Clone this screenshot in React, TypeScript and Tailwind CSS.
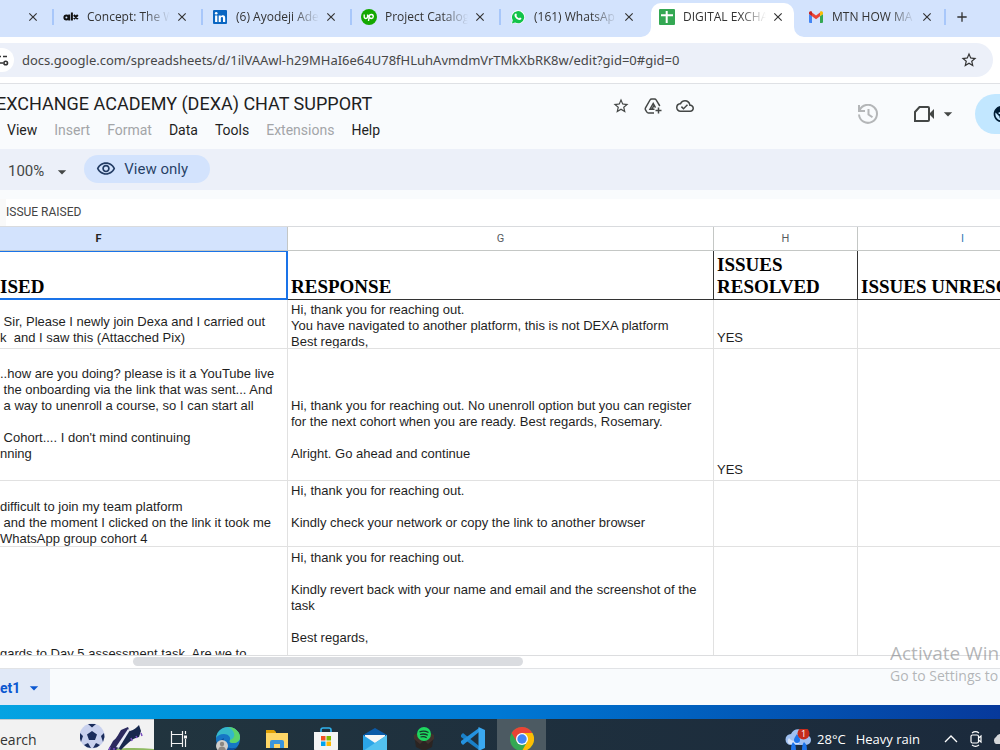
import React from 'react';
import clsx from 'clsx';
import {
  MdAdd,
  MdArrowDropDown,
  MdClose,
  MdOutlineCloudDone,
  MdOutlineVisibility,
  MdPublic,
  MdStarBorder,
} from 'react-icons/md';

/* ---------- Favicons ---------- */

function AlxIcon() {
  return (
    <svg viewBox="0 0 16 16" className="h-4 w-4 shrink-0" fill="none" stroke="#111" strokeWidth="2">
      <circle cx="3.4" cy="8.6" r="2" />
      <path d="M6.2 5.4v6.2M8.9 3.6v8M10.8 6l4 4M14.8 6l-4 4" />
    </svg>
  );
}

function LinkedInIcon() {
  return (
    <svg viewBox="0 0 16 16" className="h-4 w-4 shrink-0">
      <rect x="1" y="1" width="14" height="14" rx="1" fill="#0a66c2" />
      <circle cx="4.2" cy="4.3" r="1.3" fill="#fff" />
      <path d="M3.1 6.5h2.2V13H3.1zM6.7 6.5h2.1v.9c.4-.7 1.2-1.1 2.1-1.1 1.8 0 2.3 1.2 2.3 2.9V13H11V9.6c0-.9-.2-1.5-1-1.5s-1.2.6-1.2 1.5V13H6.7z" fill="#fff" />
    </svg>
  );
}

function UpworkIcon() {
  return (
    <svg viewBox="0 0 16 16" className="h-4 w-4 shrink-0">
      <circle cx="8" cy="8" r="8" fill="#14a800" />
      <path
        d="M3.2 5.6v2.200a1.700 1.700 0 0 0 3.400 0V5.600c.5 1.600 1.500 3.700 3.700 3.900a2 2 0 1 0-2-2.300L7.500 12"
        fill="none"
        stroke="#fff"
        strokeWidth="1.4"
      />
    </svg>
  );
}

function WhatsAppIcon() {
  return (
    <svg viewBox="0 0 16 16" className="h-4 w-4 shrink-0">
      <path d="M1.2 15l1-3.600A6.800 6.800 0 1 1 4.800 14z" fill="#fff" />
      <path d="M1.9 14.400l.9-3.200a6.100 6.100 0 1 1 2.300 2.300z" fill="#12c34a" />
      <path
        d="M5.8 4.400c.3 0 .5 0 .6.400l.5 1.200c.1.300-.5.800-.5 1 .5 1 1.400 1.700 2.500 2.200.3 0 .7-.9 1-.8l1.300.6c.3.200.2.900-.1 1.300-.9 1.100-2.500.7-3.800-.1-1.500-.9-3-2.600-2.800-4.200.1-.8.6-1.500 1.300-1.600z"
        fill="#fff"
      />
    </svg>
  );
}

function SheetsIcon() {
  return (
    <svg viewBox="0 0 16 16" className="h-4 w-4 shrink-0">
      <rect width="16" height="16" rx="1" fill="#34a853" />
      <path d="M2 5.2h12v2H8.700V14h-2V7.200H2zM6.700 2h2v4h-2z" fill="#fff" />
    </svg>
  );
}

function GmailIcon() {
  return (
    <svg viewBox="0 0 16 16" className="h-4 w-4 shrink-0">
      <path d="M1 5l3 2.200V14H2a1 1 0 0 1-1-1z" fill="#4285f4" />
      <path d="M15 5l-3 2.200V14h2a1 1 0 0 0 1-1z" fill="#34a853" />
      <path d="M4 3.400l4 3 4-3v3.800l-4 3-4-3z" fill="#ea4335" />
      <path d="M1 5V4c0-1.600 1.700-2.200 3-1.200v4.400z" fill="#c5221f" />
      <path d="M15 5V4c0-1.600-1.700-2.200-3-1.200v4.400z" fill="#fbbc04" />
    </svg>
  );
}

/* ---------- Browser chrome ---------- */

interface BrowserTab {
  title: string;
  icon: React.ReactNode;
  active?: boolean;
  separator?: boolean;
}

const browserTabs: BrowserTab[] = [
  { title: 'Concept: The W', icon: <AlxIcon />, separator: true },
  { title: '(6) Ayodeji Ade', icon: <LinkedInIcon />, separator: true },
  { title: 'Project Catalog', icon: <UpworkIcon />, separator: true },
  { title: '(161) WhatsAp', icon: <WhatsAppIcon />, separator: true },
  { title: 'DIGITAL EXCHA', icon: <SheetsIcon />, active: true },
  { title: 'MTN HOW MA', icon: <GmailIcon /> },
];

function CloseButton({ label }: { label: string }) {
  return (
    <button aria-label={`Close ${label}`} className="flex h-4 w-4 shrink-0 items-center justify-center text-[#333]">
      <MdClose className="h-3.5 w-3.5" />
    </button>
  );
}

function TabFoot({ side }: { side: 'left' | 'right' }) {
  return (
    <svg
      viewBox="0 0 10 10"
      className={clsx('absolute bottom-0 h-2.5 w-2.5', side === 'left' ? '-left-2.5' : '-right-2.5')}
      fill="#fff"
    >
      <path d={side === 'left' ? 'M10 0v10H0A10 10 0 0 0 10 0z' : 'M0 0v10h10A10 10 0 0 1 0 0z'} />
    </svg>
  );
}

function TabStrip() {
  return (
    <div className="flex h-[37px] shrink-0 items-end overflow-hidden bg-[#d3e3fd]">
      <div className="flex h-[34px] w-[52px] shrink-0 items-center justify-end pr-[11px] pb-1.5">
        <CloseButton label="tab" />
      </div>
      {browserTabs.map((tab) => (
        <div key={tab.title} className="flex h-[34px] w-[149px] shrink-0">
          <span className={clsx('mt-1.5 mr-px h-4 w-0.5 shrink-0', tab.separator && 'bg-[#a8c7fa]')} />
          <div
            className={clsx(
              'relative flex h-full w-[143px] items-center gap-1 px-2 pb-1.5',
              tab.active && 'rounded-t-[10px] bg-white'
            )}
          >
            {tab.active && <TabFoot side="left" />}
            {tab.icon}
            <a
              href="#"
              className="min-w-0 flex-1 overflow-hidden pl-1 font-['Open_Sans',sans-serif] text-[12px] whitespace-nowrap text-[#333] [mask-image:linear-gradient(to_right,black_70%,transparent)]"
            >
              {tab.title}
            </a>
            <CloseButton label={tab.title} />
            {tab.active && <TabFoot side="right" />}
          </div>
        </div>
      ))}
      <div className="flex h-[34px] items-center gap-2 pb-1.5">
        <span className="-ml-0.5 h-4 w-0.5 bg-[#a8c7fa]" />
        <button aria-label="New tab" className="text-[#333]">
          <MdAdd className="h-4 w-4" />
        </button>
      </div>
    </div>
  );
}

function AddressBar() {
  return (
    <div className="flex h-[47px] shrink-0 items-center border-b border-[#dfe1e5] bg-white pr-[7px]">
      <div className="flex h-[34px] w-full items-center overflow-hidden rounded-r-full bg-[#ecf0f9]">
        <button aria-label="Site information" className="flex h-6 w-3.5 shrink-0 items-center rounded-r-full bg-white text-[#333]">
          <svg viewBox="0 0 10 12" className="h-3 w-2.5" fill="none" stroke="currentColor" strokeWidth="1.6">
            <path d="M0 2.500h1M3 2.500h4M0 9h3" />
            <circle cx="5.7" cy="9" r="1.8" />
          </svg>
        </button>
        <input
          aria-label="Address"
          readOnly
          defaultValue="docs.google.com/spreadsheets/d/1ilVAAwl-h29MHaI6e64U78fHLuhAvmdmVrTMkXbRK8w/edit?gid=0#gid=0"
          className="min-w-0 flex-1 bg-transparent px-2 pt-px font-['Noto_Sans',sans-serif] text-[13px] text-[#474747] outline-none"
        />
        <button aria-label="Bookmark this tab" className="mr-[15px] text-[#333]">
          <MdStarBorder className="h-[18px] w-[18px]" />
        </button>
      </div>
    </div>
  );
}

/* ---------- Document header ---------- */

const menus = [
  { label: 'View' },
  { label: 'Insert', disabled: true },
  { label: 'Format', disabled: true },
  { label: 'Data' },
  { label: 'Tools' },
  { label: 'Extensions', disabled: true },
  { label: 'Help' },
];

function DriveShortcutIcon() {
  return (
    <svg viewBox="0 0 18 18" className="h-[18px] w-[18px]" fill="none" stroke="currentColor" strokeWidth="1.5">
      <path d="M10 16H4.500a2 2 0 0 1-1.700-1L1.500 12.800a2 2 0 0 1 0-2L6 3a2 2 0 0 1 1.700-1h2.800a2 2 0 0 1 1.700 1l3.600 6" />
      <path d="M10.500 12.200H6L9.200 6.500l2.300 4.200M8 12l2-3.500" />
      <path d="M14.500 10.500v6M11.500 13.500h6" />
    </svg>
  );
}

function DocumentHeader() {
  return (
    <header className="flex h-[65px] shrink-0 overflow-hidden bg-[#f9fbfd]">
      <div className="pt-2">
        <h1 className="-ml-1 font-['Roboto',sans-serif] text-[18px] leading-6 whitespace-nowrap text-[#1f1f1f]">
          EXCHANGE ACADEMY (DEXA) CHAT SUPPORT
        </h1>
        <nav className="flex gap-[17px] pt-1 pl-[7px] font-['Roboto',sans-serif] text-[14px] leading-5">
          {menus.map((menu) => (
            <button key={menu.label} disabled={menu.disabled} className="text-[#1f1f1f] disabled:text-[#a3a5a8]">
              {menu.label}
            </button>
          ))}
        </nav>
      </div>
      <div className="ml-auto flex">
        <div className="mt-3 flex h-5 items-center gap-3.5 text-[#444746]">
          <button aria-label="Star"><MdStarBorder className="h-[18px] w-[18px]" /></button>
          <button aria-label="Add shortcut to Drive"><DriveShortcutIcon /></button>
          <button aria-label="Saved to Drive"><MdOutlineCloudDone className="h-[18px] w-[18px]" /></button>
        </div>
        <div className="mt-2.5 ml-[164px] flex h-10 items-center">
          <button aria-label="Version history" className="text-[#b4b6b8]">
            <svg viewBox="0 0 20 20" className="h-5 w-5" fill="none" stroke="currentColor" strokeWidth="2">
              <path d="M1 1v6h6M1.600 6.500A9 9 0 1 1 1 10.500M10.500 5v5.500l4 2.800" />
            </svg>
          </button>
          <button aria-label="Join a call" className="ml-9 flex items-center text-[#444746]">
            <svg viewBox="0 0 20 16" className="h-4 w-5" fill="none" stroke="currentColor" strokeWidth="2">
              <path d="M1 15V6l4.500-5H14a1 1 0 0 1 1 1v12a1 1 0 0 1-1 1z" />
              <path d="M15.500 7.500L20 3v10l-4.500-4.500z" fill="currentColor" stroke="none" />
            </svg>
            <MdArrowDropDown className="ml-1 h-5 w-5" />
          </button>
          <button aria-label="Share" className="ml-[17px] h-10 w-[25px] overflow-hidden rounded-l-full bg-[#c2e7ff] pl-[17px] text-[#001d35]">
            <MdPublic className="h-5 w-5" />
          </button>
        </div>
      </div>
    </header>
  );
}

function Toolbar() {
  return (
    <div className="mb-[9px] flex h-[41px] shrink-0 items-center bg-[#ecf0f9] font-['Roboto',sans-serif] text-[#444746]">
      <button aria-label="Zoom" className="flex items-center pt-1 pl-2 text-[15px]">
        100%
        <MdArrowDropDown className="ml-2 h-5 w-5" />
      </button>
      <button className="mb-0.5 ml-3 flex h-7 items-center gap-2 rounded-full bg-[#d3e3fd] pr-[22px] pl-3 text-[15px] text-[#041e49]/85">
        <MdOutlineVisibility className="h-5 w-5" />
        <span className="pt-px">View only</span>
      </button>
    </div>
  );
}

function FormulaBar() {
  return (
    <div className="flex h-7 shrink-0 items-center border-b border-[#d9dbde] bg-white">
      <span className="h-full w-1.5 shrink-0 bg-[#f9f9f9]" />
      <input
        aria-label="Formula"
        readOnly
        defaultValue="ISSUE RAISED"
        className="min-w-0 flex-1 pb-0.5 font-['Roboto',sans-serif] text-[12px] text-[#444] outline-none"
      />
    </div>
  );
}

/* ---------- Sheet ---------- */

interface SheetRow {
  box: string;
  top?: boolean[];
  cells: string[][];
}

const rows: SheetRow[] = [
  {
    box: 'h-12',
    top: [false, true],
    cells: [
      [' Sir, Please I newly join Dexa and I carried out', 'k  and I saw this (Attacched Pix)'],
      [
        'Hi, thank you for reaching out.',
        'You have navigated to another platform, this is not DEXA platform',
        'Best regards,',
      ],
      ['YES'],
      [],
    ],
  },
  {
    box: 'h-[131px]',
    cells: [
      [
        '..how are you doing? please is it a YouTube live',
        ' the onboarding via the link that was sent... And',
        ' a way to unenroll a course, so I can start all',
        '',
        ' Cohort.... I don\'t mind continuing',
        'nning',
        '',
      ],
      [
        'Hi, thank you for reaching out. No unenroll option but you can register',
        'for the next cohort when you are ready. Best regards, Rosemary.',
        '',
        'Alright. Go ahead and continue',
        '',
      ],
      ['YES'],
      [],
    ],
  },
  {
    box: 'h-[65px]',
    top: [true, true],
    cells: [
      [
        '',
        'difficult to join my team platform',
        ' and the moment I clicked on the link it took me',
        'WhatsApp group cohort 4',
      ],
      ['Hi, thank you for reaching out.', '', 'Kindly check your network or copy the link to another browser'],
      [],
      [],
    ],
  },
  {
    box: 'h-[140px] pt-[3px]',
    top: [true, true],
    cells: [
      ['', '', '', '', '', '', 'gards to Day 5 assessment task. Are we to'],
      [
        'Hi, thank you for reaching out.',
        '',
        'Kindly revert back with your name and email and the screenshot of the',
        'task',
        '',
        'Best regards,',
      ],
      [],
      [],
    ],
  },
];

const headings = [['ISED'], ['RESPONSE'], ['ISSUES', 'RESOLVED'], ['ISSUES UNRESOLVED']];

function Lines({ lines }: { lines: string[] }) {
  return (
    <>
      {lines.map((line, i) => (
        <div key={i}>{line || '\u00a0'}</div>
      ))}
    </>
  );
}

function Sheet() {
  return (
    <main className="min-h-0 flex-1 overflow-hidden border-b border-[#dcdddf] bg-white">
      <table className="w-full min-w-[1067px] table-fixed border-separate border-spacing-0">
        <colgroup>
          <col className="w-[288px]" />
          <col className="w-[426px]" />
          <col className="w-[144px]" />
          <col />
        </colgroup>
        <thead>
          <tr className="font-['Roboto',sans-serif] text-[11px] leading-[23px] text-[#575b5f]">
            <th className="border-r border-b border-[#c4c7c5] bg-[#d3e3fd] p-0 pr-[90px] font-bold text-[#222]">F</th>
            <th className="border-r border-b border-[#c4c7c5] p-0 font-normal">G</th>
            <th className="border-r border-b border-[#c4c7c5] p-0 font-normal">H</th>
            <th className="border-b border-[#c4c7c5] p-0 font-normal text-[#2f78b5]">I</th>
          </tr>
        </thead>
        <tbody>
          <tr className="font-['Liberation_Serif',serif] text-[19px] leading-[22px] font-bold text-black">
            {headings.map((lines, i) => (
              <td key={i} className={clsx('relative border-b border-[#333] p-0', i > 0 && 'border-r')}>
                <div
                  className={clsx(
                    'flex h-12 flex-col justify-end overflow-hidden pb-px whitespace-pre',
                    i > 0 && 'pl-[3px]'
                  )}
                >
                  <Lines lines={lines} />
                </div>
                {i === 0 && (
                  <span className="absolute inset-x-0 top-0 -bottom-px border-t border-r-2 border-b-2 border-[#1a73e8]" />
                )}
              </td>
            ))}
          </tr>
          {rows.map((row, r) => (
            <tr key={r} className="font-['Liberation_Sans',sans-serif] text-[13px] leading-4 text-[#1f1f1f]">
              {row.cells.map((lines, c) => (
                <td key={c} className="border-r border-b border-[#e1e1e1] p-0">
                  <div
                    className={clsx(
                      'flex flex-col overflow-hidden py-0.5 whitespace-pre',
                      row.box,
                      !row.top?.[c] && 'justify-end',
                      c > 0 && 'pl-[3px]'
                    )}
                  >
                    <Lines lines={lines} />
                  </div>
                </td>
              ))}
            </tr>
          ))}
        </tbody>
      </table>
    </main>
  );
}

function SheetFooter() {
  return (
    <footer className="shrink-0">
      <div className="h-[13px] border-b border-[#e1e3e6] bg-white pt-px">
        <div className="ml-[133px] h-[9px] w-[39%] rounded-full bg-[#dadce0]" />
      </div>
      <div className="flex h-9 bg-[#f9fbfd]">
        <button className="flex w-[50px] items-center bg-[#e1e9f7] pt-0.5 font-['Roboto',sans-serif] text-[14px] font-bold text-[#0b57d0]">
          et1
          <MdArrowDropDown className="ml-1 h-5 w-5" />
        </button>
      </div>
    </footer>
  );
}

/* ---------- Taskbar ---------- */

const taskIcons = [
  {
    name: 'Task View',
    art: (
      <g fill="none" stroke="#f3f3f3" strokeWidth="1.2">
        <path d="M4.500 4v3.500h11V4M4.500 20v-3.500h11V20M4.500 7.500v9M15.500 7.500v9M18.500 4v3M18.500 12v8" />
        <path d="M17 8.500h3v3h-3z" fill="#f3f3f3" stroke="none" />
      </g>
    ),
  },
  {
    name: 'Edge',
    art: (
      <>
        <circle cx="12" cy="12" r="12" fill="#1676c5" />
        <path d="M0 11C1 4 6 0 12 0c7 0 12 5 12 10 0 4-3 6-7 6-3 0-4-1-3-3 1-3-2-6-6-6-4 0-7 2-8 4z" fill="#35b8c9" />
        <path d="M12 0c7 0 12 5 12 10 0 4-3 6-7 6-3 0-4-1-3-3 7-2 5-10-2-13z" fill="#5bd36b" />
        <path d="M8 11c-2 6 3 11 10 10 2 0 4-1 5-3-4 8-17 7-19-1 0-3 1-5 4-6z" fill="#0d4f9c" />
        <circle cx="6" cy="19" r="6" fill="#d0cecb" />
        <circle cx="6" cy="17" r="2.2" fill="#8b8783" />
        <path d="M2 24c0-6 8-6 8 0z" fill="#8b8783" />
      </>
    ),
  },
  {
    name: 'File Explorer',
    art: (
      <>
        <path d="M1 3h8l2 2v4H1z" fill="#e0a106" />
        <path d="M1 6h22v15H1z" fill="#ffd767" />
        <path d="M5 21v-6a2 2 0 0 1 2-2h10a2 2 0 0 1 2 2v6h-4v-4H9v4z" fill="#3a96dd" />
      </>
    ),
  },
  {
    name: 'Microsoft Store',
    art: (
      <>
        <path d="M7 6V3a2 2 0 0 1 2-2h6a2 2 0 0 1 2 2v3" fill="none" stroke="#2fb2ee" strokeWidth="1.6" />
        <path d="M0 5h24v17a2 2 0 0 1-2 2H2a2 2 0 0 1-2-2z" fill="#f4f4f4" />
        <path d="M7 9h4.500v4.500H7z" fill="#f25022" />
        <path d="M12.500 9H17v4.500h-4.500z" fill="#7fba00" />
        <path d="M7 14.500h4.500V19H7z" fill="#00a4ef" />
        <path d="M12.500 14.500H17V19h-4.500z" fill="#ffb900" />
      </>
    ),
  },
  {
    name: 'Mail',
    art: (
      <>
        <path d="M0 8l12-7 12 7v4H0z" fill="#0a5aa8" />
        <path d="M2 8h20v9H2z" fill="#f6f6f6" />
        <path d="M0 8l12 8 12-8v16H0z" fill="#2ba5e8" />
        <path d="M0 24L24 8v16z" fill="#53c2f0" />
      </>
    ),
  },
  {
    name: 'Spotify',
    art: (
      <>
        <path d="M2 8l10 4 10-4-2 12-8 4-8-4z" fill="#2b2422" />
        <path d="M2 8l5-3 5 8-4 4-6-5zM22 8l-5-3-5 8 4 4 6-5z" fill="#40322d" />
        <circle cx="12" cy="7" r="7" fill="#1ed760" />
        <path d="M7.500 4.800c3-1 6.500-.7 9 .7M8 7.500c2.600-.8 5.500-.5 7.800.8M8.500 10c2-.6 4.500-.4 6.200.7" fill="none" stroke="#17352a" strokeWidth="1.3" />
      </>
    ),
  },
  {
    name: 'Visual Studio Code',
    art: (
      <>
        <path d="M0 8l2-2 16 13v4L0 10z" fill="#1a80c8" />
        <path d="M0 16l2 2L18 5V1L0 14z" fill="#2492df" />
        <path d="M17.500 0L24 3v18l-6.500 3z" fill="#3aa8f0" />
      </>
    ),
  },
  {
    name: 'Chrome',
    active: true,
    art: (
      <>
        <circle cx="12" cy="12" r="12" fill="#34a853" />
        <path d="M12 12L1.600 6A12 12 0 0 1 22.400 6z" fill="#ea4335" />
        <path d="M12 6h10.400A12 12 0 0 1 12 24l5-9z" fill="#fbbc04" />
        <path d="M1.600 6L7 15l5-9z" fill="#ea4335" />
        <circle cx="12" cy="12" r="6" fill="#fff" />
        <circle cx="12" cy="12" r="4.7" fill="#4285f4" />
      </>
    ),
  },
];

function SearchArt() {
  return (
    <svg viewBox="0 0 74 30" className="h-[30px] w-[74px]">
      <path d="M18 30c12-5 34-6 56-4v4z" fill="#8fba62" />
      <circle cx="12" cy="13" r="12.500" fill="#c9d1ee" />
      <path d="M12 8l5 3.600-2 5.400H9l-2-5.400zM8 1h8l-4 3.500zM0 10l3 3-2 6-1.500-5zM24 10l-3 3 2 6 1.500-5zM4 22l4-2 3 5-4-.8zM20 22l-4-2-3 5 4-.8z" fill="#1b2d5c" />
      <path d="M28 27l5-9c4-3 6-8 8-11l7-3 2 5c-3 8-8 13-14 18z" fill="#2c2a5e" />
      <path d="M38 25l8-15 4-2c4-1 7-4 9-6l2 6-2 6c-7 1-13 8-18 13z" fill="#17284d" />
      <path d="M36 24L48 6l2 1-11 18z" fill="#e8eaf6" />
      <path d="M30 24l-1 4M34 25v3M51 15l1 3M56 13l1 2M61 10l1 3" stroke="#7a4fc0" strokeWidth="1.5" />
    </svg>
  );
}

function Taskbar() {
  return (
    <div className="flex h-[31px] shrink-0 overflow-hidden bg-linear-to-r from-[#22363f] to-[#1b2a3c] font-['Open_Sans',sans-serif]">
      <button className="flex w-[154px] shrink-0 border-t border-[#c8cccf] bg-[#f2f2f2] text-left">
        <span className="pt-2.5 text-[14px] leading-5 text-[#333]">earch</span>
        <span className="ml-auto pt-[3px]">
          <SearchArt />
        </span>
      </button>
      {taskIcons.map((item) => (
        <button
          key={item.name}
          aria-label={item.name}
          className={clsx('flex w-[49px] shrink-0 justify-center pt-2', item.active && 'bg-[#4c5a62]')}
        >
          <svg viewBox="0 0 24 24" className="h-6 w-6 shrink-0">
            {item.art}
          </svg>
        </button>
      ))}
      <div className="ml-auto flex shrink-0 text-[13px] leading-5 text-white">
        <button className="flex pt-2.5" aria-label="Weather">
          <svg viewBox="0 0 26 24" className="h-6 w-[26px]">
            <path d="M6 16a5.500 5.500 0 0 1 0-11 8 8 0 0 1 15 1 5 5 0 0 1 0 10z" fill="#9fc0f2" />
            <path d="M4 15a4.500 4.500 0 0 1 0-6c2 3 6 4 10 2v4z" fill="#d5e3fa" />
            <path d="M12 5c2 3 3 4 3 6a3 3 0 0 1-6 0c0-2 1-3 3-6zM8 13c3 3 3 4 3 11H6c0-6 0-8 2-11zM19 13c3 3 3 4 3 11h-5c0-6 0-8 2-11z" fill="#1d74ea" />
            <circle cx="18.500" cy="4.500" r="6" fill="#c42b1c" />
            <text x="18.500" y="8" textAnchor="middle" fontSize="9" fill="#fff">1</text>
          </svg>
          <span className="ml-1.5">28°C</span>
          <span className="ml-2.5">Heavy rain</span>
        </button>
        <button aria-label="Show hidden icons" className="ml-6 flex pt-3.5">
          <svg viewBox="0 0 14 12" className="h-3 w-3.5" fill="none" stroke="#fff" strokeWidth="1.3">
            <path d="M1 9l6-6 6 6" />
          </svg>
        </button>
        <button aria-label="Meet Now" className="ml-3 flex pt-3">
          <svg viewBox="0 0 12 16" className="h-4 w-3" fill="none" stroke="#fff" strokeWidth="1.2">
            <rect x="1" y="4" width="7.500" height="8" rx="1.500" />
            <path d="M8.500 7l2.500-2v6L8.500 9M2 2c2-1.500 5-1.500 7 0M2 14c2 1.500 5 1.500 7 0" />
          </svg>
        </button>
        <button aria-label="OneDrive" className="ml-2.5 flex w-2 overflow-hidden pt-[15px]">
          <svg viewBox="0 0 20 12" className="h-3 w-5 shrink-0">
            <path d="M4 10a4 4 0 0 1 0-7 6 6 0 0 1 11 1 3 3 0 0 1 0 6z" fill="#d5d7da" />
          </svg>
        </button>
      </div>
    </div>
  );
}

function ActivationNotice() {
  return (
    <div className="pointer-events-none absolute right-0 bottom-16 w-[110px] overflow-hidden font-['Open_Sans',sans-serif] whitespace-nowrap text-[#76797c]/55">
      <p className="pb-px text-[19px] leading-6">Activate Win</p>
      <p className="text-[14px] leading-5">Go to Settings to</p>
    </div>
  );
}

export default function App() {
  return (
    <div className="relative flex h-screen flex-col overflow-hidden bg-[#f9fbfd]">
      <TabStrip />
      <AddressBar />
      <DocumentHeader />
      <Toolbar />
      <FormulaBar />
      <Sheet />
      <SheetFooter />
      <div className="h-3.5 shrink-0 bg-linear-to-r from-[#05a3e2] via-[#0078d4] to-[#07399b]" />
      <Taskbar />
      <ActivationNotice />
    </div>
  );
}
